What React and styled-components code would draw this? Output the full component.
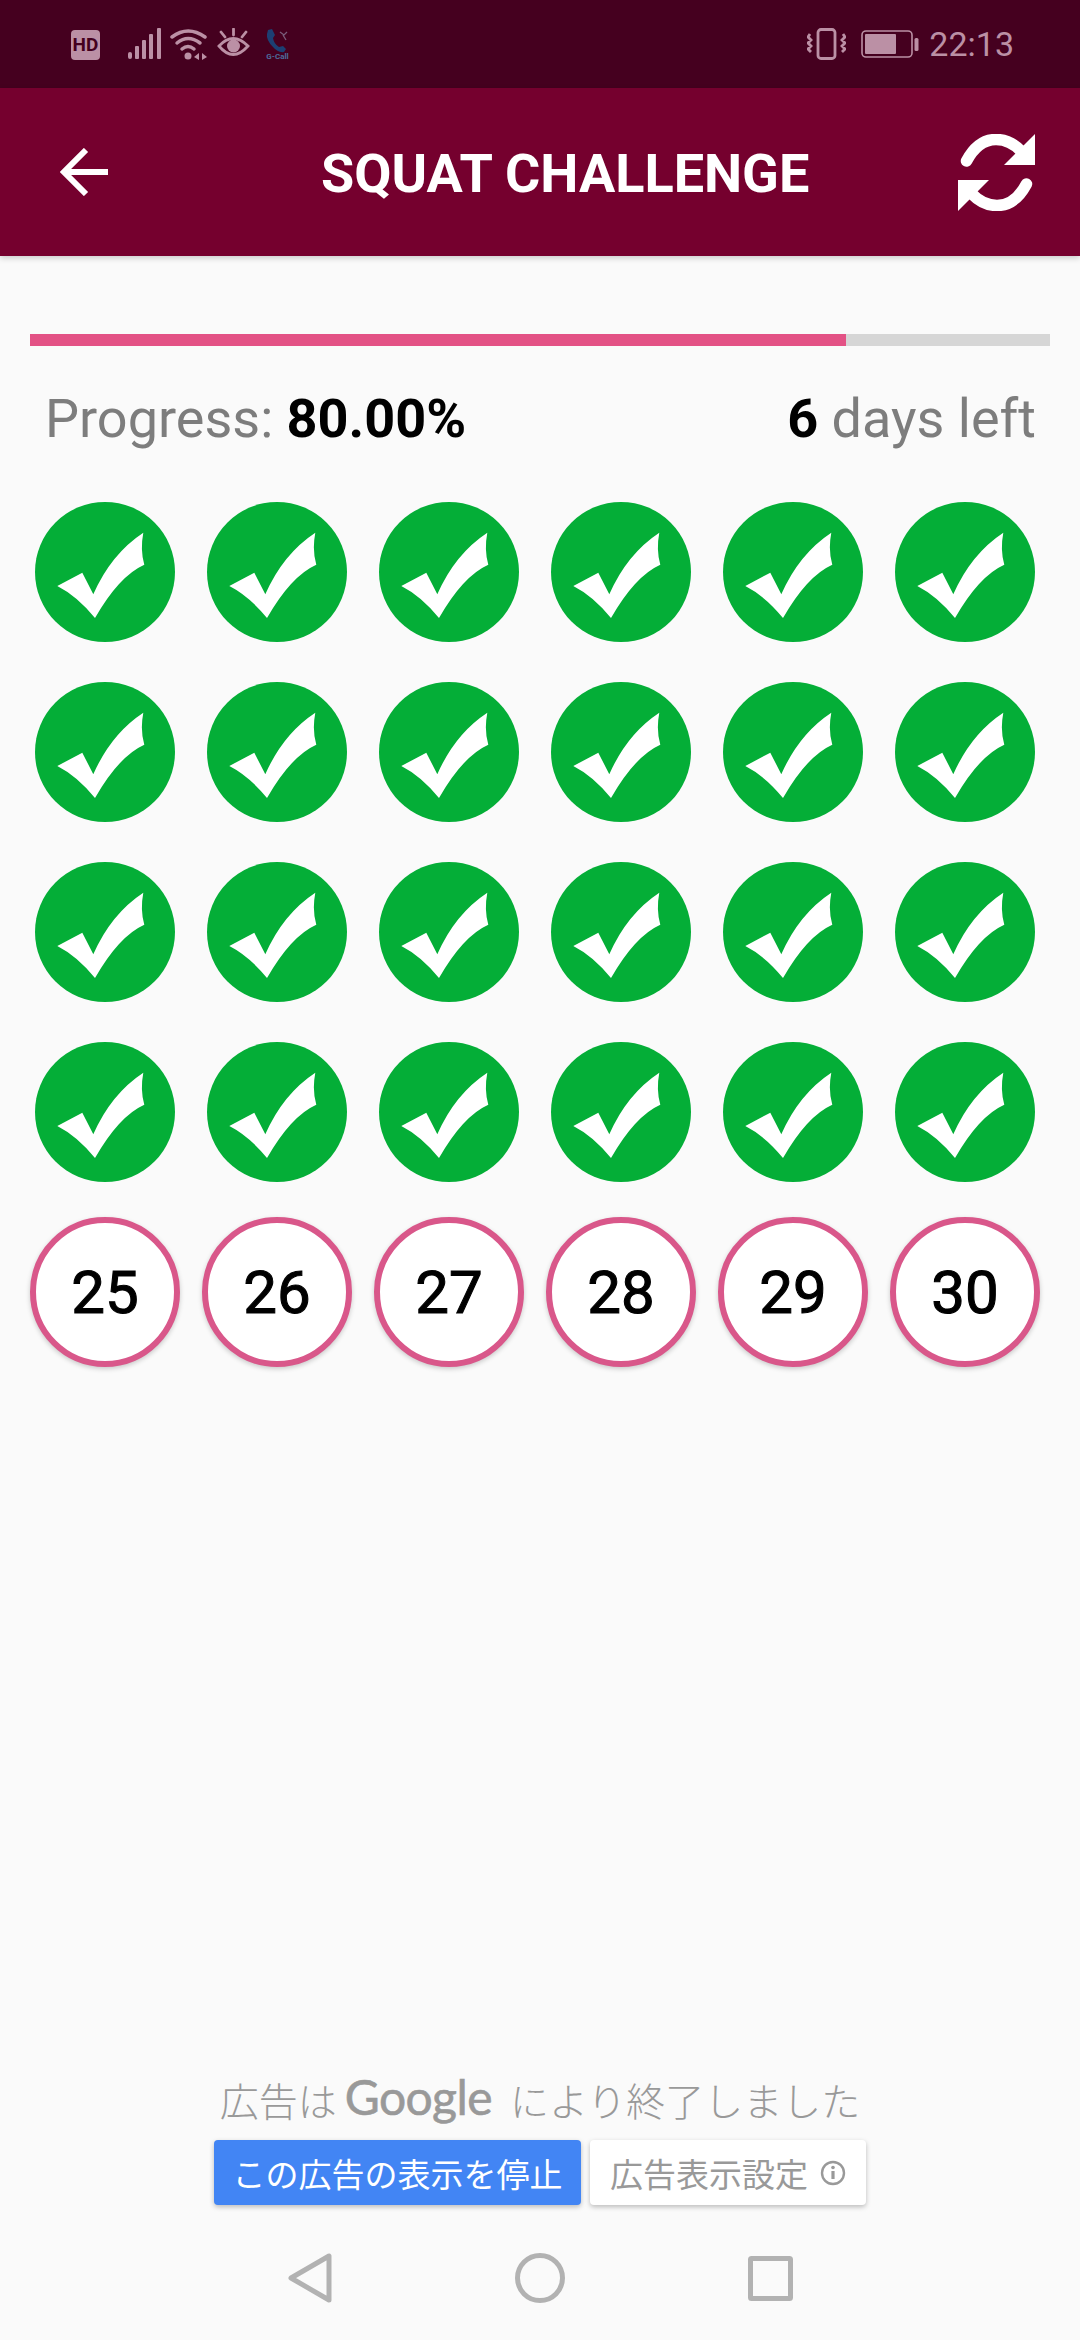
import React from 'react';
import styled, { createGlobalStyle } from 'styled-components';

const Global = createGlobalStyle`
  html, body { margin: 0; padding: 0; background: #fafafa; }
  * { box-sizing: border-box; }
`;
const Page = styled.div`
  width: 1080px; height: 2340px; display: flex; flex-direction: column;
  background: #fafafa; font-family: Roboto, "Liberation Sans", sans-serif; overflow: hidden;
`;
const StatusBar = styled.div`
  height: 88px; flex: none; background: #45001f; display: flex; align-items: center;
  justify-content: space-between; padding: 0 66px 0 71px; color: #bb90a5;
`;
const StatusGroup = styled.div`display: flex; align-items: center;`;
const Hd = styled.div`
  width: 29px; height: 30px; border-radius: 4px; background: #bb90a5; color: #45001f;
  font: 700 19px/30px Roboto, sans-serif; text-align: center; margin-right: 28px; margin-top: 1px;
`;
const StatusIcon = styled.svg`display: block; flex: none; margin-left: ${p => p.$ml || 0}px;`;
const Clock = styled.span`font-size: 34px; font-weight: 400; margin-left: 10px;`;
const AppBar = styled.header`
  height: 168px; flex: none; background: #75002e; display: flex; align-items: center;
  padding: 0 45px 0 60px;
  box-shadow: 0 2px 6px rgba(0,0,0,.2); position: relative; z-index: 1;
`;
const Title = styled.h1`
  margin: 3px auto 0 213px; color: #fff; font-size: 54px; font-weight: 700;
`;
const Main = styled.main`flex: 1; padding: 78px 30px 0;`;
const Track = styled.div`height: 12px; background: #d6d6d6;`;
const Fill = styled.div`height: 100%; background: #e35285;`;
const ProgressRow = styled.div`
  display: flex; justify-content: space-between; padding: 0 14px 0 15px; margin-top: 43px;
  font-size: 54px; line-height: 59px; color: #7d7d7d;
`;
const Strong = styled.b`color: #000; font-weight: 700;`;
const Grid = styled.div`
  display: grid; grid-template-columns: repeat(6, 172px); grid-auto-rows: 180px;
  margin: 34px 0 0 -11px;
`;
const Cell = styled.div`display: flex; align-items: center; justify-content: center;`;
const DoneCircle = styled.div`
  width: 140px; height: 140px; border-radius: 50%; background: #04ae37;
`;
const DayCircle = styled.div`
  width: 150px; height: 150px; border-radius: 50%; background: #fff; border: 6px solid #d9578a;
  display: flex; align-items: center; justify-content: center; color: #000;
  font-size: 60px; font-weight: 400; -webkit-text-stroke: 1.1px #000; box-shadow: 0 2px 5px rgba(0,0,0,.2);
`;
const Ad = styled.section`
  flex: none; display: flex; flex-direction: column; align-items: center;
`;
const AdLine = styled.div`
  display: flex; align-items: center; height: 60px; color: #999;
  font-family: "Noto Sans CJK JP", sans-serif; font-size: 39px; font-weight: 300;
`;
const GoogleWord = styled.span`
  font-family: Lato, sans-serif; font-size: 48px; font-weight: 400; letter-spacing: -0.6px;
  margin: -6px 18px 0 8px; color: #999; -webkit-text-stroke: 0.6px #999;
`;
const AdButtons = styled.div`display: flex; gap: 9px; margin-top: 11px;`;
const AdButton = styled.div`
  height: 65px; border-radius: 4px; display: flex; align-items: center; justify-content: center;
  font-family: "Noto Sans CJK JP", sans-serif; font-size: 33px;
  width: ${p => p.$w}px; background: ${p => p.$bg}; color: ${p => p.$fg};
  box-shadow: 0 2px 5px rgba(0,0,0,.25);
`;
const NavBar = styled.nav`
  height: 135px; flex: none; display: flex; align-items: center; justify-content: center; gap: 183px;
  padding-top: 11px;
`;

const Check = () => (
  <svg width="140" height="140" viewBox="0 0 140 140" style={{ display: 'block' }}>
    <path fill="#fff" d="M22.3 84L47.3 70.7L58.3 92.3Q76 52 108.3 30.7Q105 48 109.3 62.7Q84 74 60 116Q42 94 22.3 84Z" />
  </svg>
);

const Arrows = () => (
  <>
    <path d="M8.5 27Q20 5.5 38 5.5Q52 5.5 63 17" fill="none" stroke="#fff" strokeWidth="11.5" strokeLinecap="round" />
    <path d="M77 0V31H46Z" fill="#fff" />
  </>
);

const days = Array.from({ length: 30 }, (_, i) => i + 1);

export default function App() {
  return (
    <Page>
      <Global />
      <StatusBar>
        <StatusGroup>
          <Hd>HD</Hd>
          <StatusIcon width="33" height="32" viewBox="0 0 33 32" fill="#bb90a5">
            <rect x="0" y="24" width="4" height="7" rx="2" />
            <rect x="7" y="18" width="4" height="13" rx="1" />
            <rect x="14" y="12" width="4" height="19" rx="1" />
            <rect x="21" y="6" width="4" height="25" rx="1" />
            <rect x="29" y="0" width="4" height="31" rx="1" />
          </StatusIcon>
          <StatusIcon $ml={9} width="38" height="32" viewBox="0 0 38 32" fill="none" stroke="#bb90a5" strokeWidth="3.5" strokeLinecap="round">
            <path d="M2 9Q18 -3 35 9" />
            <path d="M7 15Q18 6 30 15" />
            <path d="M12 21Q18 16 24 21" />
            <circle cx="18" cy="28" r="3.5" fill="#bb90a5" stroke="none" />
            <path d="M29 25l-5 4 5 3zM32 25l5 4-5 3z" fill="#bb90a5" stroke="none" />
          </StatusIcon>
          <StatusIcon $ml={9} width="33" height="32" viewBox="0 0 33 32" fill="none" stroke="#bb90a5" strokeWidth="2.8" strokeLinecap="round">
            <path d="M2 18Q16 3 31 18Q16 35 2 18Z" />
            <circle cx="16.5" cy="18" r="6.5" fill="#bb90a5" stroke="none" />
            <path d="M16.5 1v6M4 4l4 5M29 4l-4 5" />
          </StatusIcon>
          <StatusIcon $ml={13} width="29" height="32" viewBox="0 0 29 32">
            <path fill="#1d3f73" d="M5 2l4-1 3 6-2 3q1 6 6 9l4-1 3 3-2 3q-6 1-11-5Q3 12 4 6z" />
            <path stroke="#7a5d7a" strokeWidth="1.3" fill="none" d="M17 4l4 3 3-3M20 7l3 5" />
            <text x="14.5" y="31" textAnchor="middle" fontFamily="Roboto, sans-serif" fontWeight="700" fontSize="8" fill="#4d6c9c">G-Call</text>
          </StatusIcon>
        </StatusGroup>
        <StatusGroup>
          <StatusIcon width="39" height="32" viewBox="0 0 39 32" fill="none" stroke="#bb90a5">
            <rect x="11" y="1.5" width="17" height="29" rx="3" strokeWidth="2.8" />
            <path strokeWidth="2.8" d="M3 6l-2 3 3 3-3 3 3 3-3 3 3 3M36 6l2 3-3 3 3 3-3 3 3 3-3 3" />
          </StatusIcon>
          <StatusIcon $ml={15} width="58" height="28" viewBox="0 0 58 28">
            <rect x="1" y="1" width="50" height="26" rx="4" fill="none" stroke="#bb90a5" strokeWidth="1.6" />
            <rect x="4" y="4" width="31" height="20" rx="1" fill="#bb90a5" />
            <rect x="53.5" y="8" width="4" height="13" rx="1.5" fill="#bb90a5" />
          </StatusIcon>
          <Clock>22:13</Clock>
        </StatusGroup>
      </StatusBar>

      <AppBar>
        <svg width="48" height="48" viewBox="0 0 48 48" fill="none" stroke="#fff" strokeWidth="6" style={{ flex: 'none' }}>
          <path d="M48 24H4M26 2L4 24l22 22" />
        </svg>
        <Title>SQUAT CHALLENGE</Title>
        <svg width="77" height="77" viewBox="0 0 77 77" style={{ flex: 'none' }}>
          <Arrows />
          <g transform="rotate(180 38.5 38.5)"><Arrows /></g>
        </svg>
      </AppBar>

      <Main>
        <Track><Fill style={{ width: '80%' }} /></Track>
        <ProgressRow>
          <span>Progress: <Strong>80.00%</Strong></span>
          <span><Strong>6</Strong> days left</span>
        </ProgressRow>
        <Grid>
          {days.map(d => (
            <Cell key={d}>
              {d < 25 ? <DoneCircle><Check /></DoneCircle> : <DayCircle>{d}</DayCircle>}
            </Cell>
          ))}
        </Grid>
      </Main>

      <Ad>
        <AdLine>広告は<GoogleWord>Google</GoogleWord>により終了しました</AdLine>
        <AdButtons>
          <AdButton $w={367} $bg="#4285f4" $fg="#fff">この広告の表示を停止</AdButton>
          <AdButton $w={276} $bg="#fff" $fg="#999">
            広告表示設定
            <svg width="26" height="26" viewBox="0 0 26 26" style={{ marginLeft: 12 }} fill="none" stroke="#999" strokeWidth="2.4">
              <circle cx="13" cy="13" r="11" />
              <path d="M13 11v8" strokeWidth="3.2" />
              <circle cx="13" cy="7.5" r="1.8" fill="#999" stroke="none" />
            </svg>
          </AdButton>
        </AdButtons>
      </Ad>

      <NavBar>
        <svg width="44" height="50" viewBox="0 0 44 50" fill="none" stroke="#b2b2b2" strokeWidth="5" strokeLinejoin="round">
          <path d="M41 3V47L3 25Z" />
        </svg>
        <svg width="50" height="50" viewBox="0 0 50 50" fill="none" stroke="#b2b2b2" strokeWidth="5">
          <circle cx="25" cy="25" r="22.5" />
        </svg>
        <svg width="45" height="45" viewBox="0 0 45 45" fill="none" stroke="#b2b2b2" strokeWidth="5" strokeLinejoin="round">
          <rect x="2.5" y="2.5" width="40" height="40" rx="1" />
        </svg>
      </NavBar>
    </Page>
  );
}
